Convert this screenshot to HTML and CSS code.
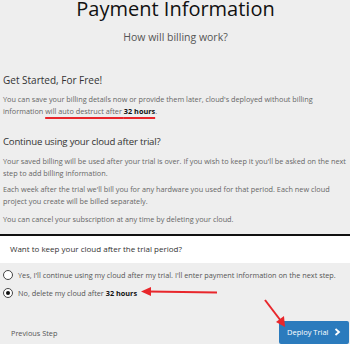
FILE: index.html
```html
<!DOCTYPE html>
<html>
<head>
<meta charset="utf-8">
<link rel="stylesheet" href="styles.css">
</head>
<body>
<div class="page">
  <h1 class="title">Payment Information</h1>
  <p class="subtitle">How will billing work?</p>

  <h2 class="h-small">Get Started, For Free!</h2>
  <p class="para first">You can save your billing details now or provide them later, cloud's deployed without billing information <span class="mark">will auto destruct after <b>32 hours</b></span>.</p>

  <h2 class="h-big">Continue using your cloud after trial?</h2>
  <p class="para first">Your saved billing will be used after your trial is over. If you wish to keep it you'll be asked on the next step to add billing information.</p>
  <p class="para">Each week after the trial we'll bill you for any hardware you used for that period. Each new cloud project you create will be billed separately.</p>
  <p class="para last">You can cancel your subscription at any time by deleting your cloud.</p>

  <div class="question">Want to keep your cloud after the trial period?</div>

  <div class="options">
    <label class="opt"><span class="radio"></span>Yes, I'll continue using my cloud after my trial. I'll enter payment information on the next step.</label>
    <label class="opt"><span class="radio on"></span>No, delete my cloud after&nbsp;<b>32 hours</b></label>
  </div>

  <div class="footer">
    <span class="prev">Previous Step</span>
    <span class="btn">Deploy Trial <svg width="7" height="8" viewBox="0 0 7 8"><path d="M1.5 1 L5 4 L1.5 7" fill="none" stroke="#fff" stroke-width="1.8"/></svg></span>
  </div>

  <svg class="arrows" width="350" height="344" viewBox="0 0 350 344">
    <line x1="217" y1="295.5" x2="148" y2="294.5" stroke="#e8262b" stroke-width="2"/>
    <polygon points="141,294.5 151,290 151,299" fill="#e8262b"/>
    <line x1="265" y1="303" x2="281" y2="324" stroke="#e8262b" stroke-width="2"/>
    <polygon points="285,330 276,325 284,319" fill="#e8262b"/>
  </svg>
</div>
</body>
</html>
```
FILE: styles.css
```css
html, body {
  margin: 0;
  padding: 0;
  background: #eeeeee;
}
body {
  font-family: "Open Sans", "DejaVu Sans", sans-serif;
  color: #666;
  width: 350px;
  height: 344px;
  overflow: hidden;
}
.page {
  position: relative;
  padding: 0 2px 0 3px;
}
.title {
  margin: -3px 0 0;
  font-size: 20px;
  font-weight: 400;
  color: #111;
  text-align: center;
  line-height: 24px;
}
.subtitle {
  margin: 10px 0 0;
  font-size: 10.5px;
  color: #555;
  text-align: center;
  line-height: 12px;
}
.h-small {
  margin: 30px 0 0;
  font-size: 10px;
  font-weight: 400;
  color: #333;
  line-height: 14px;
}
.h-big {
  margin: 17px 0 0;
  font-size: 9.6px;
  letter-spacing: -0.2px;
  font-weight: 400;
  color: #333;
  line-height: 15px;
}
.para {
  margin: 4px 0 0;
  font-size: 7.3px;
  line-height: 12px;
  color: #666;
}
.para.first {
  margin-top: 6px;
}
.para.last {
  margin-top: 6px;
}
.para b {
  color: #111;
  font-weight: 700;
}
.mark {
  text-decoration: underline;
  text-decoration-color: #e8262b;
  text-decoration-thickness: 2px;
  text-underline-offset: 2.5px;
}
.question {
  margin: 9px -2px 0 -3px;
  border-top: 2px solid #111;
  background: #fff;
  padding: 6px 10px 8px;
  font-size: 8px;
  line-height: 13px;
  color: #333;
}
.options {
  margin-top: 6px;
  display: flex;
  flex-direction: column;
  gap: 6px;
}
.opt {
  display: flex;
  align-items: center;
  font-size: 7.3px;
  color: #555;
  line-height: 12px;
}
.opt b {
  color: #111;
}
.radio {
  width: 8px;
  height: 8px;
  border: 1px solid #444;
  border-radius: 50%;
  margin-right: 5px;
  flex: none;
  background: #fff;
  box-sizing: content-box;
  position: relative;
}
.radio.on::after {
  content: "";
  position: absolute;
  left: 2px;
  top: 2px;
  width: 4px;
  height: 4px;
  border-radius: 50%;
  background: #111;
}
.footer {
  margin-top: 22px;
  display: flex;
  justify-content: space-between;
  align-items: center;
}
.prev {
  margin-left: 8px;
  font-size: 7.3px;
  color: #555;
}
.btn {
  display: flex;
  align-items: center;
  gap: 5px;
  background: #2b7bbd;
  color: #fff;
  font-size: 7.5px;
  padding: 6px 8px 7px 8px;
  width: 54px;
  border-radius: 2px;
  margin-right: -1px;
}
.arrows {
  position: absolute;
  left: 0;
  top: 0;
  pointer-events: none;
}
```
